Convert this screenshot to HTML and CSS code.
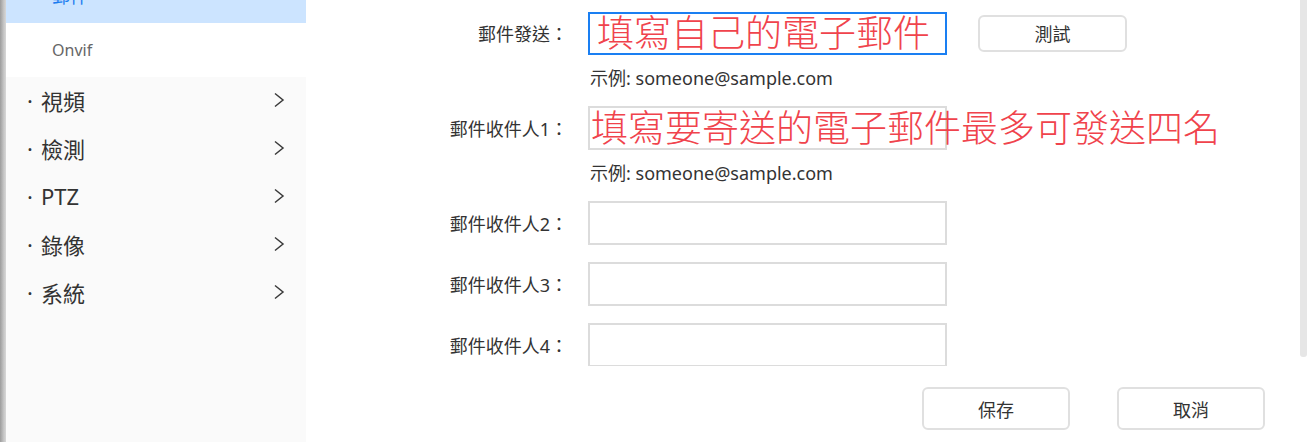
FILE: index.html
```html
<!DOCTYPE html>
<html lang="zh-Hant">
<head>
    <meta charset="UTF-8">
    <meta name="viewport" content="width=device-width, initial-scale=1.0">
    <title>郵件設定</title>
    <link rel="stylesheet" href="styles.css">
</head>
<body>

<div class="page">
    <div class="edge"></div>

    <nav class="sidebar">
        <div class="sub-item active">郵件</div>
        <div class="sub-item">Onvif</div>
        <div class="menu-item"><span class="dot">·</span><span class="menu-text">視頻</span><svg class="chev" viewBox="0 0 12 16"><polyline points="2,1.5 10,8 2,14.5"/></svg></div>
        <div class="menu-item"><span class="dot">·</span><span class="menu-text">檢測</span><svg class="chev" viewBox="0 0 12 16"><polyline points="2,1.5 10,8 2,14.5"/></svg></div>
        <div class="menu-item"><span class="dot">·</span><span class="menu-text">PTZ</span><svg class="chev" viewBox="0 0 12 16"><polyline points="2,1.5 10,8 2,14.5"/></svg></div>
        <div class="menu-item"><span class="dot">·</span><span class="menu-text">錄像</span><svg class="chev" viewBox="0 0 12 16"><polyline points="2,1.5 10,8 2,14.5"/></svg></div>
        <div class="menu-item"><span class="dot">·</span><span class="menu-text">系統</span><svg class="chev" viewBox="0 0 12 16"><polyline points="2,1.5 10,8 2,14.5"/></svg></div>
    </nav>

    <main class="main">
        <div class="content">
            <form class="form">
                <div class="field">
                    <label class="field-label" for="sender">郵件發送：</label>
                    <div class="input-wrap">
                        <input type="text" id="sender" class="text-input focused">
                        <span class="note">填寫自己的電子郵件</span>
                    </div>
                    <button type="button" class="btn btn-test">測試</button>
                </div>
                <div class="hint">示例: someone@sample.com</div>

                <div class="field">
                    <label class="field-label" for="rcpt1">郵件收件人1：</label>
                    <div class="input-wrap">
                        <input type="text" id="rcpt1" class="text-input">
                        <span class="note note-wide">填寫要寄送的電子郵件最多可發送四名</span>
                    </div>
                </div>
                <div class="hint">示例: someone@sample.com</div>

                <div class="field">
                    <label class="field-label" for="rcpt2">郵件收件人2：</label>
                    <div class="input-wrap"><input type="text" id="rcpt2" class="text-input"></div>
                </div>
                <div class="field">
                    <label class="field-label" for="rcpt3">郵件收件人3：</label>
                    <div class="input-wrap"><input type="text" id="rcpt3" class="text-input"></div>
                </div>
                <div class="field">
                    <label class="field-label" for="rcpt4">郵件收件人4：</label>
                    <div class="input-wrap"><input type="text" id="rcpt4" class="text-input"></div>
                </div>
            </form>
            <div class="scrollbar"></div>
        </div>

        <div class="footer">
            <button type="button" class="btn btn-footer">保存</button>
            <button type="button" class="btn btn-footer">取消</button>
        </div>
    </main>
</div>

</body>
</html>
```

FILE: styles.css
```css
body {
    margin: 0;
    font-family: "Noto Sans", "Noto Sans CJK TC", sans-serif;
    color: #333;
    background: #fff;
    overflow: hidden;
}
.page {
    display: flex;
    height: 442px;
}
.edge {
    width: 6px;
    flex-shrink: 0;
    background: linear-gradient(to right, #9c9c9c, #c4c4c4 60%, #d8d8d8);
}

/* sidebar */
.sidebar {
    width: 300px;
    flex-shrink: 0;
    background: #fafafa;
    overflow: hidden;
}
.sub-item {
    height: 54px;
    line-height: 54px;
    padding-left: 46px;
    font-size: 16px;
    color: #666;
    background: #fff;
}
.sub-item.active {
    margin-top: -31px;
    font-size: 18px;
    background: #cce4ff;
    color: #1a7cf0;
}
.menu-item {
    box-sizing: border-box;
    height: 48px;
    display: flex;
    align-items: center;
    padding: 0 21px 3px 21px;
    font-size: 22px;
    color: #333;
}
.dot {
    width: 6px;
    text-align: center;
}
.menu-text {
    flex: 1;
    margin-left: 8px;
}
.chev {
    width: 12px;
    height: 16px;
    fill: none;
    stroke: #3a3a3a;
    stroke-width: 1.5;
}

/* main area */
.main {
    flex: 1;
    display: flex;
    flex-direction: column;
}
.content {
    height: 366px;
    overflow: hidden;
    display: flex;
}
.form {
    flex: 1;
    padding-top: 11px;
}
.scrollbar {
    width: 7px;
    height: 357px;
    background: #e6e6e6;
    border-radius: 0 0 3px 3px;
}
.field {
    display: flex;
    align-items: center;
    height: 44px;
    margin-bottom: 17px;
}
.field-label {
    width: 262px;
    text-align: right;
    font-size: 18px;
    color: #333;
}
.input-wrap {
    position: relative;
    margin-left: 20px;
}
.text-input {
    display: block;
    box-sizing: border-box;
    width: 359px;
    height: 44px;
    border: 2px solid #dcdcdc;
    background: #fff;
    outline: none;
}
.text-input.focused {
    height: 43px;
    border-color: #1a7ff2;
}
.note {
    position: absolute;
    left: 9px;
    top: 50%;
    transform: translateY(-54%);
    font-family: "Noto Sans CJK TC", sans-serif;
    font-size: 37px;
    font-weight: 300;
    line-height: 1;
    color: #f0434c;
    white-space: nowrap;
    pointer-events: none;
}
.note-wide {
    left: 3px;
}
.hint {
    margin: -6px 0 16px 284px;
    font-size: 18px;
    line-height: 24px;
    color: #333;
}

/* buttons */
.btn {
    box-sizing: border-box;
    background: #fff;
    border: 2px solid #e0e0e0;
    border-radius: 6px;
    font-family: inherit;
    font-size: 18px;
    color: #333;
    cursor: pointer;
}
.btn-test {
    width: 149px;
    height: 37px;
    margin-left: 31px;
}
.footer {
    display: flex;
    justify-content: flex-end;
    gap: 47px;
    padding: 21px 42px 0 0;
}
.btn-footer {
    width: 148px;
    height: 43px;
}
```
